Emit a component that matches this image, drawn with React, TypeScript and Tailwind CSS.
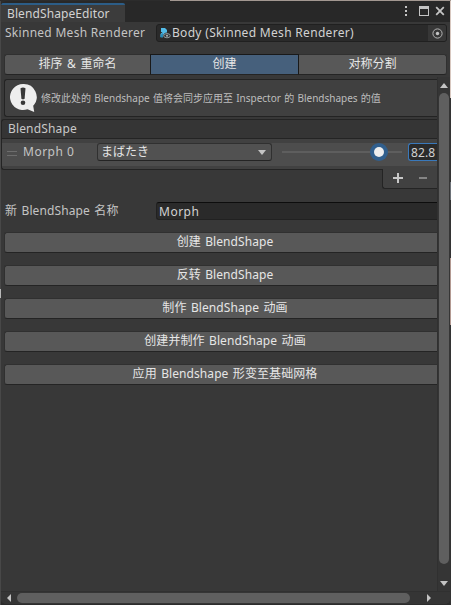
import React from "react";

const actions = [
  { label: "创建 BlendShape" },
  { label: "反转 BlendShape" },
  { label: "制作 BlendShape 动画" },
  { label: "创建并制作 BlendShape 动画" },
  { label: "应用 Blendshape 形变至基础网格" },
];

function TitleBar() {
  return (
    <div className="flex h-[21px] shrink-0 bg-[#282828]">
      <div className="mt-[2px] h-[19px] w-[124px] rounded-t-[2px] border-t-2 border-[#2c5d87] bg-[#3c3c3c] pl-[6px] leading-[18px] text-[#d2d2d2] tracking-[0.1px]">
        BlendShapeEditor
      </div>
      <svg className="ml-auto h-[21px] w-[50px]" viewBox="400 1 50 21" fill="#c4c4c4">
        <rect x="405" y="6" width="2" height="2" />
        <rect x="405" y="10" width="2" height="2" />
        <rect x="405" y="14" width="2" height="2" />
        <path fillRule="evenodd" d="M419 6h10v10h-10zM420 9v6h8v-6z" />
        <path d="M436.2 7.2l7.6 7.6M443.800 7.200l-7.600 7.600" stroke="#c4c4c4" strokeWidth="1.8" />
      </svg>
    </div>
  );
}

function RendererField() {
  return (
    <div className="mt-[2px] flex h-[18px] shrink-0 pr-[3px] pl-[4px]">
      <div className="w-[151px] shrink-0 leading-[17px] text-[#c4c4c4] tracking-[0.28px]">Skinned Mesh Renderer</div>
      <div className="flex min-w-0 flex-1 overflow-hidden rounded-[3px] border border-[#202020] bg-[#2a2a2a]">
        <svg className="mt-[3px] ml-[3px] h-[11px] w-[11px] shrink-0" viewBox="0 0 11 11">
          <path d="M1 0h4l2 2v2.500C4.500 4.500 3 6 3 9H.5V6l2-2H1z" fill="#53bce8" />
          <path d="M.5 7l2.500-2v4.500H.5z" fill="#2789b5" />
          <ellipse cx="7" cy="7.700" rx="3.300" ry="2.100" fill="#33393c" stroke="#8f989b" />
          <circle cx="7" cy="7.700" r="1" fill="#b4b4b4" />
        </svg>
        <span className="ml-[1px] leading-[16px] text-[#d2d2d2] tracking-[0.31px]">Body (Skinned Mesh Renderer)</span>
        <div className="ml-auto flex w-[18px] items-center justify-center bg-[#373737]">
          <svg className="h-[11px] w-[11px]" viewBox="0 0 11 11">
            <circle cx="5.5" cy="5.5" r="4.6" fill="none" stroke="#b4b4b4" />
            <circle cx="5.5" cy="5.5" r="1.7" fill="#c4c4c4" />
          </svg>
        </div>
      </div>
    </div>
  );
}

function Tabs() {
  return (
    <div className="mt-[12px] flex h-[21px] shrink-0 pr-[3px] pl-[3px] text-center leading-[18px] text-[#e6e6e6] [word-spacing:1.4px]">
      <div className="w-[146px] rounded-l-[3px] border border-r-0 border-[#303030] border-b-[#242424] bg-[#585858]">排序 &amp; 重命名</div>
      <div className="w-[149px] border border-[#191919] border-b-[#242424] bg-[#46607c]">创建</div>
      <div className="flex-1 rounded-r-[3px] border border-l-0 border-[#303030] border-b-[#242424] bg-[#585858]">对称分割</div>
    </div>
  );
}

function HelpBox() {
  return (
    <div className="ml-[3px] flex h-[38px] shrink-0 items-center rounded-l-[3px] border border-r-0 border-[#232323] bg-[#404040]">
      <svg className="ml-[4px] h-[30px] w-[29px] shrink-0" viewBox="9 83 29 30">
        <path d="M23 84a13 13 0 1 0 4.500 25.200L34.200 112l-1-6.200A13 13 0 0 0 23 84z" fill="#eeeeee" />
        <path d="M20.500 88.200q2.500-1.300 5 0l-.9 10.600q-1.600 1-3.200 0z" fill="#383838" />
        <circle cx="23" cy="102.800" r="2.300" fill="#383838" />
      </svg>
      <span className="ml-[3px] text-[10px] text-[#bdbdbd] [word-spacing:0.65px]">修改此处的 Blendshape 值将会同步应用至 Inspector 的 Blendshapes 的值</span>
    </div>
  );
}

function MorphList() {
  return (
    <div className="mt-[2px] shrink-0">
      <div className="h-[20px] rounded-tl-[3px] border border-r-0 border-[#242424] bg-[#353535] pl-[6px] leading-[18px] text-[#c8c8c8] tracking-[0.15px]">
        BlendShape
      </div>
      <div className="h-[31px] rounded-bl-[3px] border border-t-0 border-r-0 border-[#242424] bg-[#414141] pt-[4px]">
        <div className="flex h-[23px] bg-[#4d4d4d]">
          <div className="mt-[8px] ml-[5px] h-[5px] w-[10px] border-y border-[#6d6d6d]" />
          <div className="ml-[6px] w-[74px] leading-[18px] text-[#c4c4c4] tracking-[0.5px]">Morph 0</div>
          <div className="flex h-[18px] w-[175px] items-center justify-between rounded-[3px] border border-[#303030] border-b-[#242424] bg-[#515151] pr-[5px] pl-[3px]">
            <span className="leading-[16px] text-[#e4e4e4]">まばたき</span>
            <svg className="h-[5px] w-[8px]" viewBox="0 0 8 5"><path d="M0 0h8L4 5z" fill="#c4c4c4" /></svg>
          </div>
          <svg className="ml-[10px] h-[18px] w-[120px]" viewBox="0 0 120 18">
            <rect y="8" width="120" height="2" fill="#5e5e5e" />
            <circle cx="97" cy="9" r="9" fill="#315f8d" />
            <circle cx="97" cy="9" r="5" fill="#eeeeee" />
          </svg>
          <div className="ml-[6px] h-[18px] flex-1 rounded-l-[3px] border border-r-0 border-[#3a79bb] bg-[#2a2a2a] pl-[2px] leading-[17px] text-[#d2d2d2] tracking-[0.1px]">82.8</div>
        </div>
      </div>
      <div className="-mt-px ml-auto h-[20px] w-[55px] rounded-bl-[3px] border-b border-l border-[#242424] bg-[#414141]">
        <svg className="h-[19px] w-[54px]" viewBox="0 -1 54 19">
          <path d="M10 8h10M15 3v10" stroke="#c8c8c8" strokeWidth="2" />
          <path d="M36 8h8" stroke="#858585" strokeWidth="2" />
        </svg>
      </div>
    </div>
  );
}

function Content() {
  return (
    <div className="flex w-[436px] shrink-0 flex-col overflow-hidden pt-[2px]">
      <HelpBox />
      <MorphList />
      <div className="mt-[13px] flex h-[18px] shrink-0 pl-[4px]">
        <div className="w-[151px] leading-[18px] text-[#c4c4c4] tracking-[0.1px] [word-spacing:1.2px]">新 BlendShape 名称</div>
        <div className="flex-1 rounded-l-[3px] border border-r-0 border-[#212121] border-t-[#0d0d0d] bg-[#2a2a2a] pl-[2px] leading-[18px] text-[#d2d2d2] tracking-[0.5px]">Morph</div>
      </div>
      <div className="mt-[12px] flex flex-col gap-[12px] pl-[3px]">
        {actions.map((a) => (
          <div key={a.label} className="h-[21px] rounded-l-[3px] border border-r-0 border-[#303030] border-b-[#242424] bg-[#585858] pl-[8px] text-center leading-[18px] text-[#e6e6e6] tracking-[0.08px] [word-spacing:1.2px]">
            {a.label}
          </div>
        ))}
      </div>
    </div>
  );
}

function DesktopEdge() {
  return (
    <div className="flex w-px shrink-0 flex-col bg-[#333333]">
      <div className="h-[97px] bg-[#d8c8c0]" />
      <div className="mt-[84px] h-[18px] bg-[#6d7278]" />
      <div className="mt-[58px] h-[67px] bg-[#b39a92]" />
    </div>
  );
}

export default function App() {
  return (
    <div className="flex h-[605px] w-[451px] flex-col overflow-hidden bg-[#2c2c2c] font-['Noto_Sans','Noto_Sans_CJK_SC',sans-serif] text-[12px] whitespace-nowrap">
      <div className="ml-[170px] h-px shrink-0 bg-[#a39891]" />
      <div className="flex h-[604px]">
        <div className="w-px shrink-0 bg-[#484848] pt-[288px]">
          <div className="h-[9px] bg-[#b8b8b8]" />
        </div>
        <div className="flex h-[603px] w-[449px] flex-col overflow-hidden rounded-[5px] bg-[#383838]">
          <TitleBar />
          <RendererField />
          <Tabs />
          <div className="mt-[2px] flex h-[514px] shrink-0">
            <Content />
            <div className="flex w-[13px] flex-col items-center border-l border-[#303030] bg-[#353535]">
              <svg className="mt-[6px] h-[5px] w-[8px] shrink-0" viewBox="0 0 8 5"><path d="M0 5h8L4 0z" fill="#c4c4c4" /></svg>
              <div className="mt-[5px] h-[471px] w-[10px] shrink-0 rounded-full bg-[#5f5f5f]" />
              <svg className="mt-[17px] h-[5px] w-[8px] shrink-0" viewBox="0 0 8 5"><path d="M0 0h8L4 5z" fill="#c4c4c4" /></svg>
            </div>
          </div>
          <div className="flex h-[13px] shrink-0 items-center border-t border-[#303030] bg-[#353535]">
            <svg className="ml-[6px] h-[8px] w-[4px] shrink-0" viewBox="0 0 4 8"><path d="M4 0v8L0 4z" fill="#c4c4c4" /></svg>
            <div className="ml-[6px] h-[10px] w-[393px] rounded-full bg-[#5f5f5f]" />
            <svg className="ml-[17px] h-[8px] w-[4px] shrink-0" viewBox="0 0 4 8"><path d="M0 0v8L4 4z" fill="#c4c4c4" /></svg>
          </div>
        </div>
        <DesktopEdge />
      </div>
    </div>
  );
}
